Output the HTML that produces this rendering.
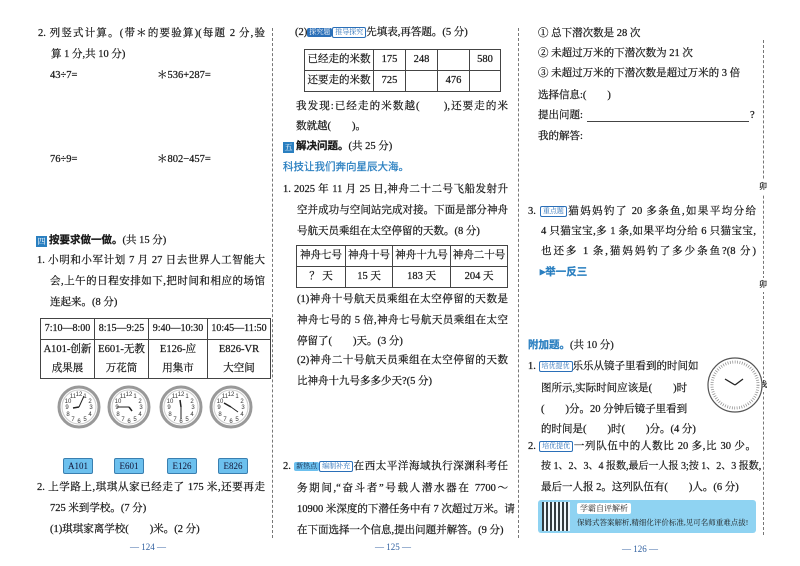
<!DOCTYPE html>
<html><head><meta charset="utf-8"><style>
body{margin:0;width:800px;height:566px;background:#fff;position:relative;overflow:hidden;font-family:"Liberation Serif","Noto Serif CJK SC",serif;color:#1a1a1a;font-size:10.5px;-webkit-text-stroke:0.25px #1a1a1a}
.l{position:absolute;white-space:nowrap;line-height:14px}
.j{text-align:justify;text-align-last:justify}
.b{font-family:"Liberation Sans","Noto Sans CJK SC",sans-serif;font-weight:bold}
.blue{color:#2a7fc0;-webkit-text-stroke:0.25px #2a7fc0}
.vd{position:absolute;width:0;border-left:1px dashed #777}
table{position:absolute;border-collapse:collapse;font-size:10.5px}
td{border:1px solid #444;text-align:center;padding:0;line-height:20px}
.tag{display:inline-block;font-size:7px;line-height:9px;padding:0 2px;border-radius:2px;vertical-align:1px;-webkit-text-stroke:0}
.btn{position:absolute;width:28px;height:14px;background:#6cc0ee;border:1px solid #3a7fb0;border-radius:2px;font-size:9px;line-height:14px;text-align:center;color:#113;-webkit-text-stroke:0}
.pg{position:absolute;font-size:9px;color:#3060a0;-webkit-text-stroke:0}
.sq{display:inline-block;width:11px;height:11px;background:#2a7fc0;color:#fff;font-size:8px;line-height:11px;text-align:center;vertical-align:-1px;margin-right:2px;-webkit-text-stroke:0}
</style></head><body>

<!-- left column -->
<div class="l j" style="left:38px;top:27px;width:227px">2. 列竖式计算。(带＊的要验算)(每题 2 分,验</div>
<div class="l" style="left:51px;top:48px">算 1 分,共 10 分)</div>
<div class="l" style="left:50px;top:69px">43÷7=</div>
<div class="l" style="left:157px;top:69px">＊536+287=</div>
<div class="l" style="left:50px;top:153px">76÷9=</div>
<div class="l" style="left:157px;top:153px">＊802−457=</div>
<div class="l" style="left:36px;top:233px"><span class="sq">四</span><span class="b">按要求做一做。</span>(共 15 分)</div>
<div class="l j" style="left:37px;top:254px;width:228px">1. 小明和小军计划 7 月 27 日去世界人工智能大</div>
<div class="l j" style="left:50px;top:275px;width:215px">会,上午的日程安排如下,把时间和相应的场馆</div>
<div class="l" style="left:50px;top:296px">连起来。(8 分)</div>
<table style="left:40px;top:318px;width:231px">
<tr><td style="width:53px;font-size:10px">7:10—8:00</td><td style="width:53px;font-size:10px">8:15—9:25</td><td style="width:58px;font-size:10px">9:40—10:30</td><td style="font-size:10px">10:45—11:50</td></tr>
<tr><td style="line-height:19px">A101-创新<br>成果展</td><td style="line-height:19px">E601-无教<br>万花筒</td><td style="line-height:19px">E126-应<br>用集市</td><td style="line-height:19px">E826-VR<br>大空间</td></tr>
</table>

<svg style="position:absolute;left:0;top:380px" width="270" height="56">
<defs><g id="ck"><circle r="20" fill="#fff" stroke="#999" stroke-width="3"/><circle r="17" fill="none" stroke="#ccc" stroke-width="1"/>
<g font-size="6" text-anchor="middle" fill="#333" font-family="Liberation Sans"><text y="-11">12</text><text x="12" y="2">3</text><text y="16">6</text><text x="-12" y="2">9</text><text x="6" y="-9">1</text><text x="11" y="-4">2</text><text x="11" y="9">4</text><text x="6" y="14">5</text><text x="-6" y="14">7</text><text x="-11" y="9">8</text><text x="-11" y="-4">10</text><text x="-6" y="-9">11</text></g></g></defs>
<g transform="translate(79,27)"><use href="#ck"/><line x1="0" y1="0" x2="-6" y2="1" stroke="#222" stroke-width="1.5"/><line x1="0" y1="0" x2="5" y2="-11" stroke="#222" stroke-width="1"/></g>
<g transform="translate(129,27)"><use href="#ck"/><line x1="0" y1="0" x2="-12" y2="0" stroke="#222" stroke-width="1"/><line x1="0" y1="0" x2="3" y2="4" stroke="#222" stroke-width="1.5"/></g>
<g transform="translate(181,27)"><use href="#ck"/><line x1="0" y1="0" x2="0" y2="12" stroke="#222" stroke-width="1"/><line x1="0" y1="0" x2="-1" y2="-7" stroke="#222" stroke-width="1.5"/></g>
<g transform="translate(231,27)"><use href="#ck"/><line x1="0" y1="0" x2="-7" y2="-4" stroke="#222" stroke-width="1.5"/><line x1="0" y1="0" x2="7" y2="5" stroke="#222" stroke-width="1"/></g>
</svg>
<div class="btn" style="left:63px;top:458px">A101</div>
<div class="btn" style="left:114px;top:458px">E601</div>
<div class="btn" style="left:167px;top:458px">E126</div>
<div class="btn" style="left:218px;top:458px">E826</div>
<div class="l j" style="left:37px;top:481px;width:228px">2. 上学路上,琪琪从家已经走了 175 米,还要再走</div>
<div class="l" style="left:50px;top:502px">725 米到学校。(7 分)</div>
<div class="l" style="left:50px;top:523px">(1)琪琪家离学校(　　)米。(2 分)</div>
<div class="pg" style="left:130px;top:542px">—  124  —</div>
<div class="vd" style="left:272px;top:28px;height:510px"></div>

<!-- middle column -->
<div class="l" style="left:295px;top:26px">(2)<span class="tag" style="background:#2a6fb8;color:#fff">探究题</span><span class="tag" style="border:1px solid #2a6fb8;color:#2a6fb8">推导探究</span>先填表,再答题。(5 分)</div>
<table style="left:304px;top:49px;width:197px">
<tr><td style="width:68px">已经走的米数</td><td style="width:31px">175</td><td style="width:31px">248</td><td style="width:31px"></td><td>580</td></tr>
<tr><td>还要走的米数</td><td>725</td><td></td><td>476</td><td></td></tr>
</table>
<div class="l j" style="left:296px;top:100px;width:212px">我发现:已经走的米数越(　　),还要走的米</div>
<div class="l" style="left:296px;top:120px">数就越(　　)。</div>
<div class="l" style="left:283px;top:139px"><span class="sq">五</span><span class="b">解决问题。</span>(共 25 分)</div>
<div class="l blue" style="left:283px;top:160px;font-family:'Liberation Sans','Noto Sans CJK SC',sans-serif">科技让我们奔向星辰大海。</div>
<div class="l j" style="left:283px;top:183px;width:225px">1. 2025 年 11 月 25 日,神舟二十二号飞船发射升</div>
<div class="l j" style="left:297px;top:204px;width:211px">空并成功与空间站完成对接。下面是部分神舟</div>
<div class="l" style="left:297px;top:225px">号航天员乘组在太空停留的天数。(8 分)</div>
<table style="left:296px;top:245px;width:212px">
<tr><td style="width:48px">神舟七号</td><td style="width:46px">神舟十号</td><td style="width:57px">神舟十九号</td><td>神舟二十号</td></tr>
<tr><td>？ 天</td><td>15 天</td><td>183 天</td><td>204 天</td></tr>
</table>
<div class="l j" style="left:297px;top:293px;width:211px">(1)神舟十号航天员乘组在太空停留的天数是</div>
<div class="l j" style="left:297px;top:314px;width:211px">神舟七号的 5 倍,神舟七号航天员乘组在太空</div>
<div class="l" style="left:297px;top:335px">停留了(　　)天。(3 分)</div>
<div class="l j" style="left:297px;top:354px;width:211px">(2)神舟二十号航天员乘组在太空停留的天数</div>
<div class="l" style="left:297px;top:375px">比神舟十九号多多少天?(5 分)</div>
<div class="l j" style="left:283px;top:460px;width:225px">2. <span class="tag" style="background:#6cc0ee;color:#124">新热点</span><span class="tag" style="border:1px solid #2a6fb8;color:#2a6fb8">编制补充</span>在西太平洋海域执行深渊科考任</div>
<div class="l j" style="left:297px;top:482px;width:211px">务期间,“奋斗者”号载人潜水器在 7700～</div>
<div class="l j" style="left:297px;top:503px;width:211px">10900 米深度的下潜任务中有 7 次超过万米。请</div>
<div class="l" style="left:297px;top:524px">在下面选择一个信息,提出问题并解答。(9 分)</div>
<div class="pg" style="left:375px;top:542px">—  125  —</div>
<div class="vd" style="left:518px;top:28px;height:510px"></div>

<!-- right column -->
<div class="l" style="left:538px;top:27px">① 总下潜次数是 28 次</div>
<div class="l" style="left:538px;top:47px">② 未超过万米的下潜次数为 21 次</div>
<div class="l" style="left:538px;top:67px">③ 未超过万米的下潜次数是超过万米的 3 倍</div>
<div class="l" style="left:538px;top:89px">选择信息:(　　)</div>
<div class="l" style="left:538px;top:109px">提出问题:</div>
<div style="position:absolute;left:587px;top:121px;width:162px;border-top:1px solid #444"></div>
<div class="l" style="left:750px;top:109px">?</div>
<div class="l" style="left:538px;top:130px">我的解答:</div>
<div class="l j" style="left:528px;top:205px;width:228px">3. <span class="tag" style="border:1px solid #2a6fb8;color:#2a6fb8">重点题</span>猫妈妈钓了 20 多条鱼,如果平均分给</div>
<div class="l j" style="left:541px;top:225px;width:215px">4 只猫宝宝,多 1 条,如果平均分给 6 只猫宝宝,</div>
<div class="l j" style="left:541px;top:245px;width:215px">也还多 1 条,猫妈妈钓了多少条鱼?(8 分)</div>
<div class="l b blue" style="left:540px;top:265px">▸举一反三</div>
<div class="vd" style="left:763px;top:40px;height:495px"></div>
<div class="l" style="left:759px;top:180px;font-size:8px;background:#fff">卯</div>
<div class="l" style="left:759px;top:278px;font-size:8px;background:#fff">卯</div>
<div class="l" style="left:759px;top:378px;font-size:8px;background:#fff">线</div>

<div class="l b blue" style="left:528px;top:338px">附加题。<span style="color:#222;font-weight:normal;-webkit-text-stroke:0.25px #222;font-family:'Liberation Serif','Noto Serif CJK SC',serif">(共 10 分)</span></div>
<div class="l" style="left:528px;top:360px">1. <span class="tag" style="border:1px solid #2a6fb8;color:#2a6fb8">培优提优</span>乐乐从镜子里看到的时间如</div>
<div class="l" style="left:541px;top:382px">图所示,实际时间应该是(　　)时</div>
<div class="l" style="left:541px;top:403px">(　　)分。20 分钟后镜子里看到</div>
<div class="l" style="left:541px;top:423px">的时间是(　　)时(　　)分。(4 分)</div>
<svg style="position:absolute;left:705px;top:355px" width="60" height="60">
<circle cx="30" cy="30" r="27" fill="#fff" stroke="#555" stroke-width="1.2"/>
<circle cx="30" cy="30" r="23" fill="none" stroke="#888" stroke-width="3" stroke-dasharray="0.7 1.7"/>
<line x1="30" y1="30" x2="20" y2="24" stroke="#222" stroke-width="1.3"/>
<line x1="30" y1="30" x2="38" y2="24" stroke="#222" stroke-width="1.3"/>
</svg>
<div class="l j" style="left:528px;top:440px;width:228px">2. <span class="tag" style="border:1px solid #2a6fb8;color:#2a6fb8">培优提优</span>一列队伍中的人数比 20 多,比 30 少。</div>
<div class="l j" style="left:541px;top:460px;width:215px;font-size:10px">按 1、2、3、4 报数,最后一人报 3;按 1、2、3 报数,</div>
<div class="l" style="left:541px;top:481px">最后一人报 2。这列队伍有(　　)人。(6 分)</div>
<div style="position:absolute;left:538px;top:500px;width:218px;height:33px;background:#8fd3f2;border-radius:3px"></div>
<div style="position:absolute;left:542px;top:502px;width:28px;height:29px;background:repeating-linear-gradient(90deg,#222 0 2px,#fff 2px 4px),#fff;opacity:.85"></div>
<div class="l" style="left:577px;top:503px;font-size:8px;background:#fff;padding:0 3px;line-height:11px;border-radius:2px;-webkit-text-stroke:0">学霸自评解析</div>
<div class="l" style="left:577px;top:518px;font-size:7.5px;line-height:10px;-webkit-text-stroke:0">保姆式答案解析,精细化评价标准,见可名师重难点拔!</div>
<div class="pg" style="left:622px;top:544px">—  126  —</div>
</body></html>
